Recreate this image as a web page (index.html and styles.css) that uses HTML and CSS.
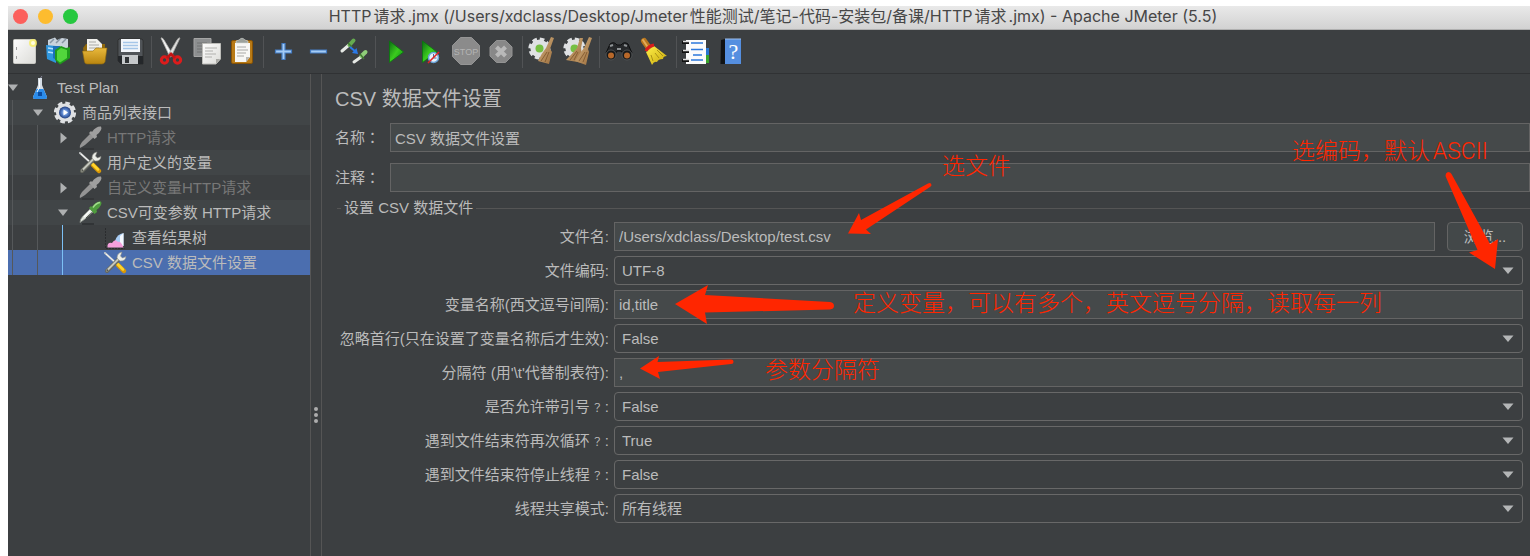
FILE: index.html
```html
<!DOCTYPE html>
<html lang="zh-CN">
<head>
<meta charset="utf-8">
<title>Apache JMeter (5.5)</title>
<link rel="stylesheet" href="styles.css">
</head>
<body>
<svg class="defs" aria-hidden="true">
  <defs>
    <linearGradient id="paper" x1="0" y1="0" x2="1" y2="1"><stop offset="0" stop-color="#fdfdfd"/><stop offset="1" stop-color="#dcdcd8"/></linearGradient>
    <linearGradient id="green" x1="0" y1="0" x2="1" y2="1"><stop offset="0" stop-color="#0a6b12"/><stop offset=".5" stop-color="#3bcb1e"/><stop offset="1" stop-color="#078a10"/></linearGradient>
    <linearGradient id="gold" x1="0" y1="0" x2="0" y2="1"><stop offset="0" stop-color="#e9b93c"/><stop offset="1" stop-color="#b9850f"/></linearGradient>
    <linearGradient id="straw" x1="0" y1="0" x2="1" y2="1"><stop offset="0" stop-color="#d6b483"/><stop offset="1" stop-color="#9a6c3b"/></linearGradient>
    <linearGradient id="yellow" x1="0" y1="0" x2="1" y2="1"><stop offset="0" stop-color="#fff04a"/><stop offset="1" stop-color="#c9a80a"/></linearGradient>
    <radialGradient id="hub"><stop offset="0" stop-color="#dff0ff"/><stop offset=".5" stop-color="#5b86d0"/><stop offset="1" stop-color="#23407f"/></radialGradient>
    <symbol id="gear" viewBox="-12 -12 24 24">
      <circle r="9.500" fill="#dfe1e3"/><circle r="9.800" fill="none" stroke="#dfe1e3" stroke-width="3.600" stroke-dasharray="4.700 3"/>
    </symbol>
    <symbol id="tools" viewBox="0 0 28 25">
      <path d="M4 3 L16 14" stroke="#c9cccb" stroke-width="2" stroke-linecap="round"/>
      <path d="M5 4 L14 12" stroke="#f7f7f7" stroke-width="1"/>
      <path d="M17 15 L23 21" stroke="#d99806" stroke-width="4.500" stroke-linecap="round"/>
      <path d="M16.500 14 L22 19.500" stroke="#ffd52c" stroke-width="2.500" stroke-linecap="round"/>
      <path d="M6 21 L18 9" stroke="#66685f" stroke-width="4" stroke-linecap="round"/>
      <path d="M6 20.500 L18 8.500" stroke="#c4c7be" stroke-width="2" stroke-linecap="round"/>
      <path d="M16 8 Q16 3 21 2 L19.500 6 L21.500 8 L25 6.500 Q24.500 11.500 19 11 Z" fill="#eceee8" stroke="#8b8d86" stroke-width=".6"/>
      <circle cx="6.300" cy="20.300" r="1" fill="#55574f"/>
    </symbol>
    <symbol id="pipette-off" viewBox="0 0 28 25">
      <path d="M4 23 Q3 21 6 17 L14 9 L18 12 L9 20 Q6 22 4 23Z" fill="#949494"/>
      <path d="M13 8 L15 6 L16 7 Q20 1 25 1.500 Q27 5 20.500 10 L21 12 L18.500 14Z" fill="#9f9f9f"/>
      <path d="M6 24 H18" stroke="#2c2e30" stroke-width="1"/>
    </symbol>
    <symbol id="pipette-on" viewBox="0 0 28 25">
      <path d="M4 22.500 Q4 19 7 16 L14 9 L17 12 L9 19 Q6 21 4 22.500Z" fill="#dfe5dd" stroke="#8d928b" stroke-width=".8"/>
      <path d="M8 17 L14 11" stroke="#fff" stroke-width="1.200"/>
      <path d="M10 18 L16 12.500" stroke="#4a4f49" stroke-width="1"/>
      <path d="M13 8 L15 6 L16 7 Q20 1 25 1.500 Q27 5 20.500 10 L21 12 L18.500 14Z" fill="#4f9c3e"/>
      <path d="M17 7.500 Q20 3 24 2.500" stroke="#a2dc8c" stroke-width="1.500" fill="none"/>
      <path d="M6 24 H18" stroke="#222426" stroke-width="1"/>
    </symbol>
    <symbol id="caret" viewBox="0 0 12 8"><path d="M.5 .5 H11.500 L6 7Z" fill="#b4b6b7"/></symbol>
  </defs>
</svg>

<div class="window">
  <header class="titlebar">
    <div class="lights"><span class="light light-close"></span><span class="light light-min"></span><span class="light light-max"></span></div>
    <div class="title">HTTP请求.jmx (/Users/xdclass/Desktop/Jmeter性能测试/笔记-代码-安装包/备课/HTTP请求.jmx) - Apache JMeter (5.5)</div>
  </header>

  <div class="toolbar" role="toolbar">
    <button aria-label="New"><svg viewBox="8 34 35 36"><rect x="13.500" y="39.500" width="22" height="24" rx="1" fill="url(#paper)" stroke="#c9c9c4"/><path d="M16.500 47v3M16.500 56v3" stroke="#9b9b9b"/><circle cx="33" cy="43" r="4" fill="#f7ee62" opacity=".8"/><circle cx="33" cy="43" r="2" fill="#fffde0"/></svg></button>
    <button aria-label="Templates"><svg viewBox="43 34 35 36"><path d="M48 40 L55 37.500 L57 40 L62 38 L68 39 V48 H48Z" fill="#c9d3dc"/><path d="M50 43l4-4M56 43l4-4M62 43l4-4" stroke="#8795a3" stroke-width="1.500"/><path d="M46 45 L56 46 V63 L47 59Z" fill="#2f96dd"/><path d="M48 48l6 1M48 52l6 1" stroke="#b5e0ff" stroke-width="1.500"/><path d="M53 46 H60 V62 L53 58Z" fill="#1c70b8"/><path d="M55 50 L61 46 L66 48 L70 47 V58 L60 64.500 L55 60Z" fill="#1f9a1b"/><path d="M57 51 L61 48 L67 50 V58 L60 62.500 L57 60Z" fill="#52d63c"/></svg></button>
    <button aria-label="Open"><svg viewBox="78 34 35 36"><path d="M83 48 L86 44 H105 V62 H85Z" fill="#8f680d"/><path d="M87 39 H97 L102 44 V55 H87Z" fill="#f1f1ee"/><path d="M89 42h7M89 45h10M89 48h10" stroke="#a9a9a6"/><path d="M82.500 51 H93 L96 48 H107 L105 62 Q104 64 102 64 H87 Q85 64 84.500 62Z" fill="url(#gold)" stroke="#8f680d" stroke-width=".6"/></svg></button>
    <button aria-label="Save"><svg viewBox="113 34 35 36"><path d="M119 39 H141 Q143 39 143 41 V64 H121 L118 61 V40Z" fill="#505458" stroke="#222" stroke-width=".6"/><path d="M118 56 H143 V64 H121 L118 61Z" fill="#24272a"/><rect x="121" y="39" width="19" height="13" fill="#f3f6fa"/><path d="M123 42.500h15M123 45.500h15M123 48.500h15" stroke="#a5c6e8" stroke-width="1.500"/><rect x="122" y="55" width="16" height="9" fill="#c5c8ca"/><rect x="125" y="57" width="4" height="6" fill="#303336"/></svg></button>
    <span class="divider"></span>
    <button aria-label="Cut"><svg viewBox="155 34 35 36"><path d="M161 38 Q162 37 164 40 L173 55 L170 57Z" fill="#f5f5f4" stroke="#b3b3b1" stroke-width=".8"/><path d="M180 38 Q179 37 177 40 L168 55 L171 57Z" fill="#e0e0de" stroke="#a5a5a3" stroke-width=".8"/><circle cx="164.500" cy="60" r="3.200" fill="none" stroke="#dd1c1c" stroke-width="3"/><circle cx="177.500" cy="60" r="3.200" fill="none" stroke="#dd1c1c" stroke-width="3"/><path d="M167 58 L171 54 L175 58" fill="none" stroke="#c41515" stroke-width="3"/></svg></button>
    <button aria-label="Copy"><svg viewBox="190 34 35 36"><path d="M194 38.500h17v18h-17z" fill="#8d8f90" stroke="#a5a5a5"/><path d="M197 43h10M197 46h6M197 49h6M197 52h6" stroke="#707273"/><path d="M202.500 43.500 H220.500 V59 L216 64 H202.500Z" fill="url(#paper)" stroke="#bdbdb9"/><path d="M205 48h12M205 51h8M205 54h11M205 57h7" stroke="#b0b0ad"/><path d="M220 59 H216 V64Z" fill="#a8a8a4"/></svg></button>
    <button aria-label="Paste"><svg viewBox="225 34 35 36"><rect x="231.500" y="40.500" width="21" height="23" rx="1.500" fill="#b87a16" stroke="#875306"/><path d="M235 43 H250 V57 L246 62 H235Z" fill="#f7f7f5"/><path d="M237 47h9M237 50h11M237 53h9M237 56h7" stroke="#a8a8a6"/><path d="M250 57 h-4v5z" fill="#b7b7b5"/><path d="M236 43 V41 L239 40 Q242 36.500 245 40 L248 41 V43Z" fill="#9ba09b" stroke="#d9dcd9" stroke-width=".6"/></svg></button>
    <span class="divider"></span>
    <button aria-label="Expand All"><svg viewBox="267 34 35 36"><path d="M282 43.500h3v6.500h6.500v3h-6.500v6.500h-3v-6.500h-6.500v-3h6.500z" fill="#a5ccf5" stroke="#447cc4" stroke-width="1.200"/></svg></button>
    <button aria-label="Collapse All"><svg viewBox="302 34 35 36"><path d="M310.500 50h16v3h-16z" fill="#a5ccf5" stroke="#447cc4" stroke-width="1.200"/></svg></button>
    <button aria-label="Toggle"><svg viewBox="337 34 35 36"><path d="M342 51 L349 45" stroke="#e6e9e5" stroke-width="3" stroke-linecap="round"/><path d="M349.500 45 L353.500 40.500" stroke="#65ab50" stroke-width="4" stroke-linecap="round"/><path d="M348 43l4 4" stroke="#417c32" stroke-width="1.500"/><path d="M350 47 L356 52" stroke="#2a79e8" stroke-width="2"/><path d="M358 54 L352 53 L356.500 48Z" fill="#2a79e8"/><path d="M354 62 L361 57" stroke="#e6e9e5" stroke-width="3" stroke-linecap="round"/><path d="M361.500 56 L365.500 52" stroke="#8fce79" stroke-width="4" stroke-linecap="round"/><path d="M360 54l4 5" stroke="#417c32" stroke-width="1.500"/></svg></button>
    <span class="divider"></span>
    <button aria-label="Start"><svg viewBox="379 34 35 36"><path d="M389.500 41 L403.500 52 L389.500 62.500Z" fill="url(#green)" stroke="#08780d" stroke-width=".8"/></svg></button>
    <button aria-label="Start no pauses"><svg viewBox="414 34 35 36"><path d="M422.500 41 L437 52 L422.500 62.500Z" fill="url(#green)" stroke="#08780d" stroke-width=".8"/><circle cx="433.500" cy="57.500" r="5" fill="#e8f2fa" stroke="#6aa3d8" stroke-width="1.500"/><path d="M433.500 54v4h3" stroke="#4a6f99" fill="none"/><path d="M428 63 L439 52" stroke="#e02525" stroke-width="1.600"/></svg></button>
    <button aria-label="Stop"><svg viewBox="449 34 35 36"><path d="M460.500 37.500h11l8 8v11l-8 8h-11l-8-8v-11z" fill="#8b8b8b" stroke="#959595"/><text x="466" y="55" text-anchor="middle" class="stop-text">STOP</text></svg></button>
    <button aria-label="Shutdown"><svg viewBox="484 34 35 36"><path d="M496.500 40.500h9l6.500 6.500v9l-6.500 6.500h-9l-6.500-6.500v-9z" fill="#888" stroke="#939393"/><path d="M496.500 47 L505.500 56 M505.500 47 L496.500 56" stroke="#b9b9b9" stroke-width="4"/></svg></button>
    <span class="divider"></span>
    <button aria-label="Clear"><svg viewBox="526 34 35 36"><use href="#gear" x="528" y="37" width="23" height="23"/><circle cx="539.500" cy="48.500" r="4" fill="#76c043"/><path d="M551 37 L554 38 L550 49 L552 52 L549 64 L538 61 Q541 54 546 48Z" fill="url(#straw)"/><path d="M541 61 L547 52 M545 62 L549 52" stroke="#7b5329" stroke-width=".8"/></svg></button>
    <button aria-label="Clear All"><svg viewBox="561 34 35 36"><use href="#gear" x="563" y="37" width="23" height="23"/><circle cx="574.500" cy="48.500" r="4" fill="#76c043"/><path d="M580 38 L583 38 L581 48 L583 63 L566 60 Q572 54 577 48Z" fill="url(#straw)"/><path d="M589 37 L592 38 L588 49 L589 52 L586 65 L575 61 Q579 54 584 48Z" fill="url(#straw)"/><path d="M570 60 L577 51 M579 61 L585 52 M583 62 L587 52 M574 60l4-8" stroke="#7b5329" stroke-width=".8"/></svg></button>
    <span class="divider"></span>
    <button aria-label="Search"><svg viewBox="603 34 35 36"><path d="M606 53 L610 44 Q614 41 617 45 H621 Q624 41 628 44 L632 53 L626 57 L621 51 H617 L613 58Z" fill="#26282a" stroke="#0e0f10"/><path d="M610 46l3-1M624 45l3 1" stroke="#909496" stroke-width="2"/><circle cx="611" cy="55" r="5" fill="#17191a" stroke="#4e5153"/><circle cx="611" cy="55.500" r="3" fill="#b8682a"/><circle cx="627" cy="55" r="5" fill="#17191a" stroke="#4e5153"/><circle cx="627" cy="55.500" r="3" fill="#b8682a"/><path d="M617 49h4" stroke="#8e9294" stroke-width="2"/></svg></button>
    <button aria-label="Reset Search"><svg viewBox="638 34 35 36"><path d="M644 41 L649 48" stroke="#b9771f" stroke-width="6" stroke-linecap="round"/><path d="M643 40 L647 46" stroke="#e2ab58" stroke-width="2" stroke-linecap="round"/><path d="M646 52 L654 46 L667 56 Q663 56 663 59 Q658 59 657 62 Q654 61 652 65Z" fill="url(#yellow)"/><path d="M651 55l2 6M655 53l4 5M657 50l6 6" stroke="#9c8310" stroke-width=".8"/><path d="M646 51 Q648 46 654 45" stroke="#d91c1c" stroke-width="3" fill="none"/></svg></button>
    <span class="divider"></span>
    <button aria-label="Function Helper"><svg viewBox="680 34 35 36"><path d="M704 48h5v7h-5z" fill="#2976d2"/><path d="M704 55h5v8h-5z" fill="#38a52c"/><rect x="686" y="40" width="20" height="24" fill="#fbfbfb"/><path d="M691 43h12M691 49.500h12M693 55h9M691 60h12" stroke="#2d78dc" stroke-width="1.600"/><path d="M682 42.500h7M682 51.500h7M682 60.500h7" stroke="#111" stroke-width="3"/><path d="M683 41.500h6M683 50.500h6M683 59.500h6" stroke="#ddd" stroke-width="1.500"/></svg></button>
    <button aria-label="Help"><svg viewBox="715 34 35 36"><path d="M721 40 L725 39 V64 H720.500Z" fill="#111315"/><rect x="725" y="39" width="16" height="25" fill="#558fe0"/><path d="M725 39h16" stroke="#9cc0f0"/><text x="733.500" y="59" text-anchor="middle" class="help-text">?</text></svg></button>
  </div>

  <div class="workspace">
    <div class="tree" role="tree">
      <div class="node"><svg class="toggle" viewBox="0 0 18 25"><path d="M0 9.500h10L5 16z"/></svg><svg class="icon" viewBox="0 0 28 25"><path d="M12 3 L16 3 L16 10 L21 22 Q21.500 24 18 24 H10 Q6.500 24 7 22 L12 10Z" fill="#d5dde5"/><path d="M10.500 14 H17.500 L21 22 Q21.500 24 18 24 H10 Q6.500 24 7 22Z" fill="#2b8cea"/><path d="M12 17h4v4h-4z" fill="#0b4ba0"/><path d="M13.500 4.500v8L11 17" stroke="#fff" fill="none"/><path d="M14.500 3 L16 1" stroke="#889"/></svg><span>Test Plan</span></div>
      <div class="node"><i class="guide"></i><svg class="toggle" viewBox="0 0 18 25"><path d="M0 9.500h10L5 16z"/></svg><svg class="icon" viewBox="0 0 28 25"><use href="#gear" x="2.500" y="1" width="23" height="23"/><circle cx="14" cy="12.500" r="6" fill="url(#hub)"/><path d="M12.500 9.500l4.500 3-4.500 3z" fill="#fff"/></svg><span>商品列表接口</span></div>
      <div class="node off"><i class="guide"></i><i class="guide"></i><svg class="toggle" viewBox="0 0 18 25"><path d="M2.500 7.500v11L9 13z"/></svg><svg class="icon"><use href="#pipette-off"/></svg><span>HTTP请求</span></div>
      <div class="node"><i class="guide"></i><i class="guide"></i><i class="toggle"></i><svg class="icon"><use href="#tools"/></svg><span>用户定义的变量</span></div>
      <div class="node off"><i class="guide"></i><i class="guide"></i><svg class="toggle" viewBox="0 0 18 25"><path d="M2.500 7.500v11L9 13z"/></svg><svg class="icon"><use href="#pipette-off"/></svg><span>自定义变量HTTP请求</span></div>
      <div class="node"><i class="guide"></i><i class="guide"></i><svg class="toggle" viewBox="0 0 18 25"><path d="M0 9.500h10L5 16z"/></svg><svg class="icon"><use href="#pipette-on"/></svg><span>CSV可变参数 HTTP请求</span></div>
      <div class="node"><i class="guide"></i><i class="guide"></i><i class="guide guide-active"></i><i class="toggle"></i><svg class="icon" viewBox="0 0 28 25"><path d="M4.500 3v20.500h19" stroke="#2a2c2e" stroke-dasharray="2 1" fill="none"/><path d="M14 16 Q16 9 22.500 8 V21 H14Z" fill="#a9cdf5"/><path d="M19 11 L22.500 8 V21 H19Z" fill="#f4f9ff"/><path d="M6.500 22.500 Q6 17 11 18 Q14 13 17 17 Q20 16 22.500 22.500Z" fill="#f59fdc"/></svg><span>查看结果树</span></div>
      <div class="node selected"><i class="guide"></i><i class="guide"></i><i class="guide guide-active"></i><i class="toggle"></i><svg class="icon"><use href="#tools"/></svg><span>CSV 数据文件设置</span></div>
    </div>

    <div class="splitter"><i></i><i></i><i></i></div>

    <main class="panel">
      <h1>CSV 数据文件设置</h1>
      <div class="line"><label for="name">名称<span class="wide" lang="zh-Hant">：</span></label><input id="name" value="CSV 数据文件设置"></div>
      <div class="line"><label for="comment">注释<span class="wide" lang="zh-Hant">：</span></label><input id="comment"></div>
      <fieldset>
        <legend>设置 CSV 数据文件</legend>
        <div class="form">
          <label for="file">文件名:</label>
          <div class="file"><input id="file" value="/Users/xdclass/Desktop/test.csv"><button>浏览...</button></div>
          <label for="enc">文件编码:</label>
          <div class="combo"><select id="enc"><option>UTF-8</option></select><svg><use href="#caret"/></svg></div>
          <label for="vars">变量名称(西文逗号间隔):</label>
          <input id="vars" value="id,title">
          <label for="first">忽略首行(只在设置了变量名称后才生效):</label>
          <div class="combo"><select id="first"><option>False</option></select><svg><use href="#caret"/></svg></div>
          <label for="delim">分隔符 (用'\t'代替制表符):</label>
          <input id="delim" value=",">
          <label for="quoted">是否允许带引号<span class="query" lang="zh-Hant">？</span>:</label>
          <div class="combo"><select id="quoted"><option>False</option></select><svg><use href="#caret"/></svg></div>
          <label for="recycle">遇到文件结束符再次循环<span class="query" lang="zh-Hant">？</span>:</label>
          <div class="combo"><select id="recycle"><option>True</option></select><svg><use href="#caret"/></svg></div>
          <label for="stop">遇到文件结束符停止线程<span class="query" lang="zh-Hant">？</span>:</label>
          <div class="combo"><select id="stop"><option>False</option></select><svg><use href="#caret"/></svg></div>
          <label for="share">线程共享模式:</label>
          <div class="combo"><select id="share"><option>所有线程</option></select><svg><use href="#caret"/></svg></div>
        </div>
      </fieldset>
    </main>
  </div>
</div>

<svg class="marks marks-left" viewBox="620 170 230 220" aria-hidden="true">
  <path d="M848 233.500 L859 213 L861 220 L928 183.500 Q931 182 931.500 185 Q931.500 186 930 187 L866 229.500 L871 234Z"/>
  <path d="M675 304 L708 285 L705 295 L830 302 Q834 302.500 834 306 Q834 309 830 309.500 L705 312.500 L707 324Z"/>
  <path d="M640 368.500 L659 356 L657.500 362 L731 359.500 Q733.500 359.500 733.500 361.500 Q733.500 364 731 364 L658 372 L660 379Z"/>
</svg>
<svg class="marks marks-right" viewBox="1440 165 62 110" aria-hidden="true">
  <path d="M1495 269 L1469 252.500 L1477.500 250 L1445.700 176.500 Q1445 173 1448 172 Q1450.500 172 1451.500 174 L1490 244 L1498 239Z"/>
</svg>
<span class="note note-file">选文件</span>
<span class="note note-vars">定义变量，可以有多个，英文逗号分隔，读取每一列</span>
<span class="note note-delim">参数分隔符</span>
<span class="note note-enc">选编码，默认ASCII</span>
</body>
</html>
```
FILE: styles.css
```css
* { box-sizing: border-box; }

body {
  position: relative;
  margin: 0;
  padding: 6px 0 0 8px;
  min-height: 100vh;
  background: #fff;
  color: #bbb;
  font: 15px/20px "Liberation Sans", "Noto Sans CJK SC", sans-serif;
  overflow-x: hidden;
}

button, input, select { font: inherit; color: inherit; }

.defs { position: absolute; width: 0; height: 0; }

.window {
  display: flex;
  flex-direction: column;
  min-height: calc(100vh - 6px);
  background: #3c3f41;
}

/* Title bar */
.titlebar {
  display: grid;
  grid-template-columns: 1fr auto 1fr;
  align-items: center;
  height: 24px;
  padding-left: 8px;
  background: linear-gradient(#e9e9e9, #d2d2d2);
  border-bottom: 1px solid #b0b0b0;
}
.lights { display: flex; gap: 10px; margin-left: -3px; padding-bottom: 3px; }
.light { width: 15px; height: 15px; border-radius: 50%; }
.light-close { background: #fc605c; }
.light-min { background: #fdbc2f; }
.light-max { background: #27c840; }
.title {
  padding-bottom: 3px;
  color: #474747;
  font: 16px/20px Inter, "Noto Sans CJK SC", sans-serif;
  text-autospace: normal;
  white-space: nowrap;
}

/* Toolbar */
.toolbar {
  display: flex;
  align-items: center;
  height: 44px;
  border-bottom: 1px solid #303234;
}
.toolbar button {
  width: 35px;
  height: 36px;
  padding: 0;
  border: 0;
  background: none;
}
.toolbar svg { display: block; width: 35px; height: 36px; }
.divider { width: 1px; height: 32px; margin: 0 3px; background: #515355; }
.stop-text { font: 9px "Liberation Sans", sans-serif; fill: #b4b4b4; }
.help-text { font: 22px "Liberation Serif", serif; fill: #fff; }

/* Workspace */
.workspace { display: flex; flex: 1; }

.tree {
  width: 303px;
  padding-top: 1px;
  border-right: 1px solid #555;
}
.node {
  display: flex;
  align-items: center;
  height: 25px;
  white-space: nowrap;
}
.node:nth-child(even) { background: #414547; }
.node.off { color: #777; }
.node.selected { background: #4b6eaf; }
.guide {
  width: 25px;
  height: 25px;
  background: linear-gradient(#55585a, #55585a) 4px 0 / 1px 100% no-repeat;
}
.guide-active { background-image: linear-gradient(#7cc0f5, #7cc0f5); }
.toggle { width: 18px; height: 25px; fill: #aeb0b1; }
.icon { width: 28px; height: 25px; margin-right: 3px; }

.splitter {
  display: flex;
  flex-direction: column;
  align-items: center;
  gap: 2px;
  width: 11px;
  padding-top: 333px;
  border-right: 1px solid #555;
}
.splitter i { width: 4px; height: 4px; border-radius: 50%; background: #adadad; }

/* Form panel */
.panel { flex: 1; min-width: 0; padding: 11px 0 12px 13px; }

h1 { margin: 0 0 10px; font-size: 20px; line-height: 28px; font-weight: normal; }

.line { display: flex; align-items: center; gap: 10px; margin-bottom: 11px; }
.wide { font-family: "Noto Sans CJK TC", sans-serif; }
.query {
  display: inline-block;
  width: 15px;
  font: 11px/15px "Noto Sans CJK TC", sans-serif;
  text-align: center;
}

input {
  flex: 1;
  min-width: 0;
  width: 100%;
  height: 29px;
  padding: 0 4px;
  background: #45494a;
  border: 1px solid #646464;
}

fieldset {
  min-width: 0;
  margin: -5px 0 0 2px;
  padding: 4px 7px 0 0;
  border: 0 solid #555;
  border-top-width: 1px;
}
legend { margin-left: 4px; padding: 0 3px; }

.form {
  display: grid;
  grid-template-columns: 272px 1fr;
  gap: 5px;
  align-items: center;
}
.form label { text-align: right; white-space: nowrap; }
.file { display: flex; gap: 12px; }
.file button {
  width: 76px;
  height: 29px;
  padding: 0;
  background: #434849;
  border: 1px solid #646464;
  border-radius: 4px;
}
.combo { display: grid; align-items: center; }
.combo select, .combo svg { grid-area: 1 / 1; }
.combo select {
  height: 29px;
  padding: 0 7px;
  appearance: none;
  background: #3c3f41;
  border: 1px solid #686868;
  border-radius: 4px;
}
.combo svg {
  justify-self: end;
  width: 12px;
  height: 8px;
  margin-right: 9px;
  pointer-events: none;
}

/* Red annotations laid over the window */
.marks { position: absolute; fill: #ff2600; overflow: visible; pointer-events: none; }
.marks-left { left: 620px; top: 170px; width: 230px; height: 220px; }
.marks-right { right: 28px; top: 165px; width: 62px; height: 110px; }
.note {
  position: absolute;
  color: #ff2600;
  font: 300 23px/32px Roboto, "Noto Sans CJK SC", sans-serif;
  text-autospace: normal;
  white-space: nowrap;
  pointer-events: none;
}
.note-file { left: 942px; top: 151px; }
.note-vars { left: 853px; top: 288px; }
.note-delim { left: 765px; top: 355px; }
.note-enc { right: 42px; top: 136px; }
```
